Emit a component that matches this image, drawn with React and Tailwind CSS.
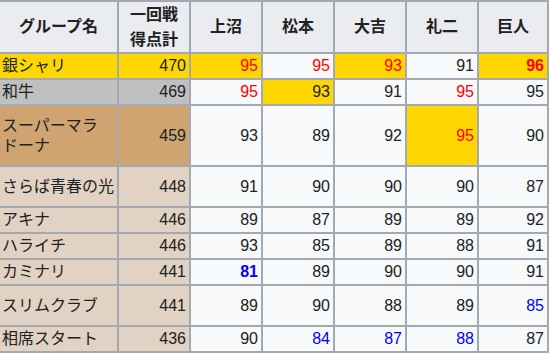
const cols = ["上沼", "松本", "大吉", "礼二", "巨人"];

// tone: row colour for name + total; s: per-judge [value, color, bold, highlight]
const rows = [
  { name: "銀シャリ", total: 470, tone: "bg-[#ffd700]", h: "h-[26px]",
    s: [[95, "r", 0, 1], [95, "r"], [93, "r", 0, 1], [91], [96, "r", 1, 1]] },
  { name: "和牛", total: 469, tone: "bg-[#c0c0c0]", h: "h-[26px]",
    s: [[95, "r"], [93, 0, 0, 1], [91], [95, "r"], [95]] },
  { name: "スーパーマラドーナ", total: 459, tone: "bg-[#cfa470]", h: "h-[61px]",
    s: [[93], [89], [92], [95, "r", 0, 1], [90]] },
  { name: "さらば青春の光", total: 448, tone: "bg-[#e1d2c3]", h: "h-[41px]",
    s: [[91], [90], [90], [90], [87]] },
  { name: "アキナ", total: 446, tone: "bg-[#e1d2c3]", h: "h-[26px]",
    s: [[89], [87], [89], [89], [92]] },
  { name: "ハライチ", total: 446, tone: "bg-[#e1d2c3]", h: "h-[26px]",
    s: [[93], [85], [89], [88], [91]] },
  { name: "カミナリ", total: 441, tone: "bg-[#e1d2c3]", h: "h-[26px]",
    s: [[81, "b", 1], [89], [90], [90], [91]] },
  { name: "スリムクラブ", total: 441, tone: "bg-[#e1d2c3]", h: "h-[41px]",
    s: [[89], [90], [88], [89], [85, "b"]] },
  { name: "相席スタート", total: 436, tone: "bg-[#e1d2c3]", h: "h-[26px]",
    s: [[90], [84, "b"], [87, "b"], [88, "b"], [87]] },
];

const cell = "flex items-center border-r-2 border-b-2 border-[#a2a9b1]";

function Score({ v, c, bold, hi, h }) {
  const color = c === "r" ? "text-[#ff0000]" : c === "b" ? "text-[#0000ff]" : "text-[#202122]";
  return (
    <div className={`${cell} ${h} justify-end px-[3px] ${hi ? "bg-[#ffd700]" : "bg-[#f8f9fa]"} ${color} ${bold ? "font-bold" : ""}`}>
      {v}
    </div>
  );
}

export default function App() {
  return (
    <div className="w-[551px] h-[355px] bg-white overflow-hidden text-[#202122] text-[16px] leading-[20px]"
      style={{ fontFamily: '"Liberation Sans", "Noto Sans CJK JP", sans-serif' }}>
      <div className="grid grid-cols-[119px_72px_72px_72px_72px_72px_70px] w-[549px]">
        {/* header */}
        <div className={`${cell} h-[54px] border-t-2 bg-[#eaecf0] justify-center font-bold`}>グループ名</div>
        <div className={`${cell} h-[54px] border-t-2 bg-[#eaecf0] justify-center font-bold text-center leading-[25px]`}>
          一回戦<br />得点計
        </div>
        {cols.map((c) => (
          <div key={c} className={`${cell} h-[54px] border-t-2 bg-[#eaecf0] justify-center font-bold`}>{c}</div>
        ))}

        {rows.map((r) => (
          <div key={r.name} className="contents">
            <div className={`${cell} ${r.h} ${r.tone} px-[2px]`}>
              <span className={r.name === "スーパーマラドーナ" ? "w-[100px]" : "whitespace-nowrap"}>{r.name}</span>
            </div>
            <div className={`${cell} ${r.h} ${r.tone} justify-end px-[3px]`}>{r.total}</div>
            {r.s.map(([v, c, bold, hi], i) => (
              <Score key={i} v={v} c={c} bold={bold} hi={hi} h={r.h} />
            ))}
          </div>
        ))}
      </div>
    </div>
  );
}
